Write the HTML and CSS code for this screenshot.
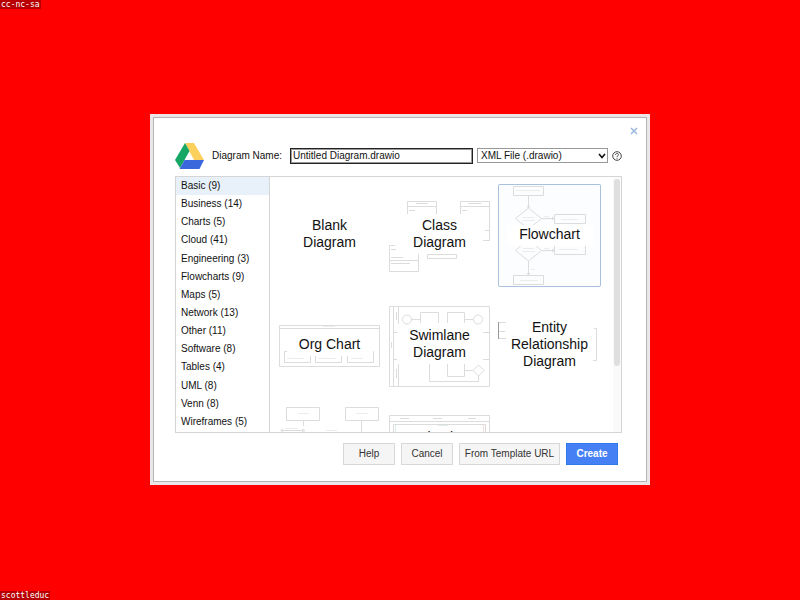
FILE: index.html
```
<!DOCTYPE html>
<html lang="en">
<head>
    <meta charset="UTF-8">
    <meta name="viewport" content="width=device-width, initial-scale=1.0">
    <title>New Diagram</title>
    <link rel="stylesheet" href="styles.css">
</head>
<body>

<div class="credit">cc-nc-sa</div>

<main class="stage">
    <form class="dialog">
        <button type="button" class="close" aria-label="Close">
            <svg width="8" height="8" viewBox="0 0 8 8"><path d="M1 1L7 7M7 1L1 7" stroke="#9db8df" stroke-width="1.6"/></svg>
        </button>

        <div class="name-row">
            <svg class="logo" width="29" height="26" viewBox="0 0 29 26">
                <path d="M10 0H19L29 17H19Z" fill="#fbd05c"/>
                <path d="M10 0L14.500 8L5 25L0 17Z" fill="#16a765"/>
                <path d="M9.500 17H29L24.500 26H4.500Z" fill="#3a67dc"/>
            </svg>
            <label class="name-label" for="name">Diagram Name:</label>
            <input class="name" id="name" type="text" value="Untitled Diagram.drawio">
            <div class="format-wrap">
                <select class="format" aria-label="File format">
                    <option>XML File (.drawio)</option>
                </select>
                <svg class="arrow" width="8" height="6" viewBox="0 0 8 6"><path d="M1 1L4 4.500L7 1" fill="none" stroke="#111" stroke-width="1.600"/></svg>
            </div>
            <a class="help-link" href="#" aria-label="Help">
                <svg width="10" height="10" viewBox="0 0 10 10" fill="none" stroke="#444">
                    <circle cx="5" cy="5" r="4.300"/>
                    <path d="M3.500 4C3.500 2 6.500 2 6.500 3.800C6.500 4.800 5 4.800 5 6M5 6.800V7.800"/>
                </svg>
            </a>
        </div>

        <div class="panel">
            <nav class="categories">
                <button type="button" class="category active">Basic (9)</button>
                <button type="button" class="category">Business (14)</button>
                <button type="button" class="category">Charts (5)</button>
                <button type="button" class="category">Cloud (41)</button>
                <button type="button" class="category">Engineering (3)</button>
                <button type="button" class="category">Flowcharts (9)</button>
                <button type="button" class="category">Maps (5)</button>
                <button type="button" class="category">Network (13)</button>
                <button type="button" class="category">Other (11)</button>
                <button type="button" class="category">Software (8)</button>
                <button type="button" class="category">Tables (4)</button>
                <button type="button" class="category">UML (8)</button>
                <button type="button" class="category">Venn (8)</button>
                <button type="button" class="category">Wireframes (5)</button>
            </nav>

            <div class="templates">
                <button type="button" class="template"><span class="title">Blank Diagram</span></button>

                <button type="button" class="template">
                    <svg class="thumb" viewBox="0 0 102 102">
                        <path d="M19.500 30V17.500H48.500V30M19.500 22.500H48.500M21 26.500H27M28 19.500H40M72.500 30V17.500H101.500V56.500H95M72.500 22.500H101.500M74 26.500H79M80 19.500H93M97 46.500H101M1.500 87.500V61.500H7M1.500 87.500H30.500V68M1.500 76.500H30.500M3 65.500H8M3 73.500H15M3 79.500H22M39.500 70.500H68.500V74.500H39.500Z"/>
                    </svg>
                    <span class="title">Class Diagram</span>
                </button>

                <button type="button" class="template selected">
                    <svg class="thumb" viewBox="0 0 102 102">
                        <path d="M15.500 2.500H45.500V11.500H15.500ZM30.500 12V24L17.500 34.500L30.500 45L43.500 34.500L30.500 24M44 34.500H56M56.500 30.500H87.500V39.500H56.500ZM30.500 55L17.500 66.500L30.500 77L43.500 66.500ZM44 66.500H56M56.500 61.500H87.500V70.500H56.500ZM30.500 77V91M15.500 91.500H45.500V100.500H15.500ZM29 22L30.500 24L32 22M54 33L56 34.500L54 36M54 65L56 66.500L54 68M29 89L30.500 91L32 89"/>
                        <path class="faint" d="M18 6.500H42M25 33.500H36M24 36.500H37M46 32.500H51M63 35.500H80M25 64.500H36M24 67.500H37M46 64.500H51M61 65.500H80M33 85.500H37M22 96.500H40"/>
                    </svg>
                    <span class="title">Flowchart</span>
                </button>

                <button type="button" class="template">
                    <svg class="thumb" viewBox="0 0 102 102">
                        <path d="M1.500 31.500H101.500V72.500H1.500ZM1.500 34.500H101.500M6.500 57.500H32.500V68.500H6.500ZM37.500 57.500H63.500V68.500H37.500ZM69.500 57.500H95.500V68.500H69.500Z"/>
                        <path class="faint" d="M45 32.500H57M9 61.500H17M9 64.500H26M40 61.500H48M40 64.500H58M73 61.500H89M73 64.500H85"/>
                    </svg>
                    <span class="title">Org Chart</span>
                </button>

                <button type="button" class="template">
                    <svg class="thumb" viewBox="0 0 102 102">
                        <path d="M1.500 12.500H101.500V92.500H1.500ZM5.500 12V92M10.500 12V30M10.500 70V92M5 38.500H11M5 65.500H11M94 38.500H101M94 65.500H101M23 25.500H32M32.500 29V18.500H50.500V29M59.500 29V18.500H76.500V29M77 25.500H85M41.500 70V87.500H90.500V82M59.500 65V82.500H76.500V65M77 76.500H85M90.500 71L96 76.500L90.500 82L85 76.500ZM3.500 48V54M8.500 18V26M8.500 75V84"/>
                        <circle cx="19" cy="25.500" r="4.500"/>
                        <circle cx="90" cy="25.500" r="4.500"/>
                    </svg>
                    <span class="title">Swimlane Diagram</span>
                </button>

                <button type="button" class="template">
                    <svg class="thumb" viewBox="0 0 102 102">
                        <path class="dark" d="M.5 28V45"/>
                        <path d="M1 28.500H8M1 37.500H7M1 44.500H8M96 34.500H98.500V66.500H95"/>
                        <path class="faint" d="M16 28.500H92"/>
                    </svg>
                    <span class="title">Entity Relationship Diagram</span>
                </button>

                <button type="button" class="template">
                    <svg class="thumb" viewBox="0 0 102 102">
                        <path d="M8.500 3.500H41.500V16.500H8.500ZM67.500 3.500H100.500V16.500H67.500ZM25.500 17V22M83.500 17V28M4 26.500H25M5 25L2.500 26.500L5 28M24 25L27 26.500L24 28"/>
                        <path class="faint" d="M20 9.500H31M78 9.500H90M7 24.500H19M48 26.500H59"/>
                    </svg>
                </button>

                <button type="button" class="template">
                    <svg class="thumb" viewBox="0 0 102 102">
                        <path d="M1.500 100V11.500H101.500V100M1.500 17.500H101.500M5.500 100V20.500H97.500V100M12 14.500H21M45 14.500H54M80 14.500H88"/>
                        <path class="green" d="M7.500 21V60M50 21.500H60"/>
                        <path class="pink" d="M95.500 21V60"/>
                    </svg>
                    <span class="title">Simple Flowchart Diagram</span>
                </button>

                <button type="button" class="template"><span class="title">Cross Functional Flowchart</span></button>
            </div>

            <div class="scrollbar"><div class="scroll-thumb"></div></div>
        </div>

        <div class="actions">
            <button type="button" class="btn">Help</button>
            <button type="button" class="btn">Cancel</button>
            <button type="button" class="btn btn-wide">From Template URL</button>
            <button type="button" class="btn btn-primary">Create</button>
        </div>
    </form>
</main>

<div class="credit">scottleduc</div>

</body>
</html>
```

FILE: styles.css
```
* {
    box-sizing: border-box;
}

body {
    margin: 0;
    min-height: 100vh;
    display: flex;
    flex-direction: column;
    background-color: #ff0000;
    font-family: "Liberation Sans", Arial, sans-serif;
    font-size: 10px;
    color: #111;
}

button, input, select {
    font-family: inherit;
    font-size: 10px;
    color: inherit;
}

.credit {
    align-self: flex-start;
    height: 9px;
    padding: 0 1px;
    background-color: #b80000;
    color: #fff;
    font-family: "DejaVu Sans Mono", monospace;
    font-size: 8px;
    line-height: 9px;
}

.stage {
    flex: 1;
    display: flex;
    justify-content: center;
    align-items: center;
    padding-bottom: 2px;
}

.dialog {
    display: flex;
    flex-direction: column;
    width: 100%;
    max-width: 500px;
    padding: 8px 25px 17px 22px;
    border: 3px solid #ebe6e8;
    background-color: #fff;
    box-shadow: inset 0 0 0 1px #b4b4b8;
}

.close {
    align-self: flex-end;
    display: flex;
    align-items: center;
    height: 12px;
    margin-right: -20px;
    padding: 0 4px;
    border: none;
    background: none;
}

.name-row {
    display: flex;
    align-items: center;
    margin-top: 6px;
    margin-bottom: 7px;
}

.name-label {
    margin-left: 8px;
    margin-right: 8px;
}

.name {
    flex: 1;
    min-width: 0;
    height: 16px;
    padding: 0 2px;
    border: 1px solid #222;
    outline: 1px solid #999;
    outline-offset: -2px;
    background-color: #fff;
}

.format-wrap {
    position: relative;
    display: flex;
    width: 131px;
    margin-left: 4px;
}

.format {
    width: 100%;
    height: 15px;
    padding: 0 3px;
    border: 1px solid #999;
    border-radius: 0;
    background-color: #fff;
    appearance: none;
}

.arrow {
    position: absolute;
    right: 2px;
    top: 5px;
}

.help-link {
    display: flex;
    margin-left: 4px;
}

.panel {
    display: flex;
    height: 257px;
    border: 1px solid #d5d5d5;
}

.categories {
    display: flex;
    flex-direction: column;
    width: 94px;
    padding-bottom: 1px;
    border-right: 1px solid #d5d5d5;
}

.category {
    flex: 1;
    padding: 0 5px;
    border: none;
    background: none;
    text-align: left;
}

.category.active {
    background-color: #e8f1fa;
}

.templates {
    flex: 1;
    display: grid;
    grid-template-columns: repeat(3, 103px);
    grid-auto-rows: 103px;
    gap: 7px;
    padding: 7px 8px;
    overflow: hidden;
}

.template {
    display: grid;
    place-items: center;
    padding: 0;
    border: none;
    background: none;
}

.template.selected {
    background-color: #fcfdff;
    box-shadow: inset 0 0 0 1px #a9c1df;
    border-radius: 2px;
}

/* drawing and title share one cell, title on top */
.thumb, .title {
    grid-area: 1 / 1;
}

.thumb {
    place-self: start;
    width: 102px;
    height: 102px;
    fill: none;
    stroke: #dcdcdc;
}

.thumb .faint {
    stroke: #ececec;
}

.thumb .dark {
    stroke: #999;
}

.thumb .green {
    stroke: #dcefe4;
}

.thumb .pink {
    stroke: #f8dede;
}

.title {
    width: 86px;
    padding: 1px 0 3px;
    background-color: rgba(255, 255, 255, 0.95);
    font-size: 14px;
    line-height: 17px;
}

.scrollbar {
    width: 8px;
    padding: 2px 1px;
    background-color: #fafafa;
}

.scroll-thumb {
    height: 187px;
    border-radius: 3px;
    background-color: #dfdfdf;
}

.actions {
    display: flex;
    justify-content: flex-end;
    gap: 6px;
    margin-top: 10px;
    margin-right: 4px;
}

.btn {
    min-width: 52px;
    height: 22px;
    padding: 0 4px;
    border: 1px solid #d8d8d8;
    background-color: #f5f5f5;
    color: #333;
}

.btn-wide {
    min-width: 101px;
}

.btn-primary {
    border-color: #3079ed;
    background-color: #4580f5;
    color: #fff;
    font-weight: bold;
}
```
